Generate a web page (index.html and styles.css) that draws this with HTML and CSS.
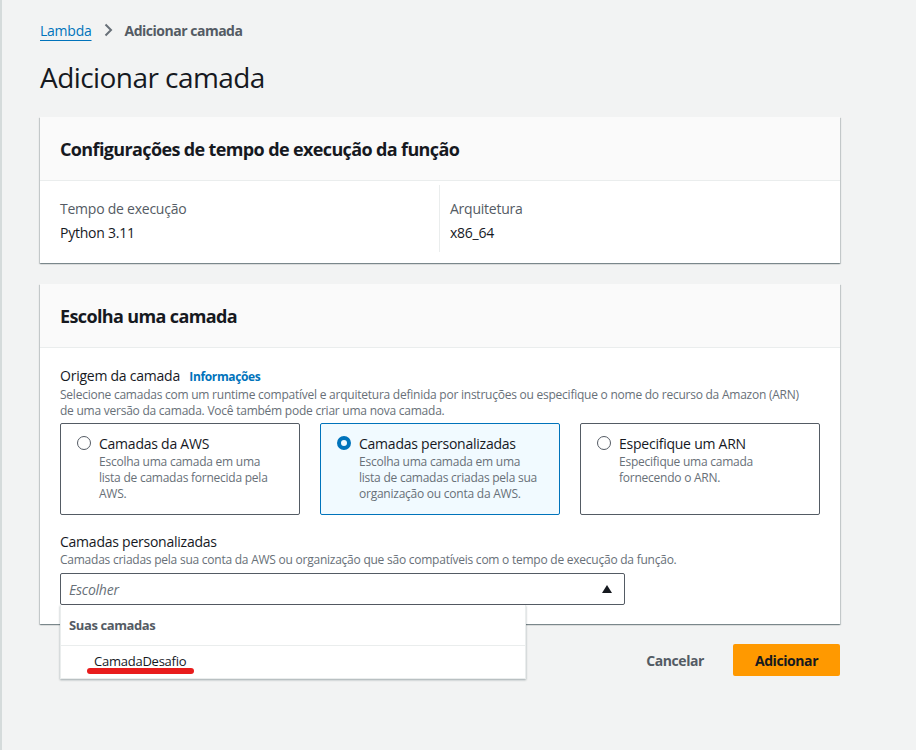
FILE: index.html
```html
<!DOCTYPE html>
<html lang="pt">
<head>
<meta charset="utf-8">
<link rel="stylesheet" href="styles.css">
</head>
<body>
<div class="page">
  <nav class="crumbs">
    <a class="crumb-link" href="#">Lambda</a>
    <svg class="chev" width="16" height="16" viewBox="0 0 16 16"><path d="M5.5 2.5 L11 8 L5.5 13.5" fill="none" stroke="#687078" stroke-width="2"/></svg>
    <span class="crumb-cur">Adicionar camada</span>
  </nav>
  <h1 class="title">Adicionar camada</h1>

  <section class="card card1">
    <div class="card-head"><h2>Configurações de tempo de execução da função</h2></div>
    <div class="card-body cols">
      <div class="col">
        <div class="kv-label">Tempo de execução</div>
        <div class="kv-value">Python 3.11</div>
      </div>
      <div class="col col-div">
        <div class="kv-label">Arquitetura</div>
        <div class="kv-value">x86_64</div>
      </div>
    </div>
  </section>

  <section class="card card2">
    <div class="card-head"><h2>Escolha uma camada</h2></div>
    <div class="card-body body2">
      <div class="field-label">Origem da camada <a class="info" href="#">Informações</a></div>
      <p class="field-desc">Selecione camadas com um runtime compatível e arquitetura definida por instruções ou especifique o nome do recurso da Amazon (ARN) de uma versão da camada. Você também pode criar uma nova camada.</p>
      <div class="tiles">
        <div class="tile">
          <div class="tile-row"><span class="radio"></span><span class="tile-title">Camadas da AWS</span></div>
          <div class="tile-desc">Escolha uma camada em uma lista de camadas fornecida pela AWS.</div>
        </div>
        <div class="tile tile-on">
          <div class="tile-row"><span class="radio radio-on"></span><span class="tile-title">Camadas personalizadas</span></div>
          <div class="tile-desc">Escolha uma camada em uma lista de camadas criadas pela sua organização ou conta da AWS.</div>
        </div>
        <div class="tile">
          <div class="tile-row"><span class="radio"></span><span class="tile-title">Especifique um ARN</span></div>
          <div class="tile-desc">Especifique uma camada fornecendo o ARN.</div>
        </div>
      </div>
      <div class="field2">
        <div class="field-label2">Camadas personalizadas</div>
        <p class="field-desc">Camadas criadas pela sua conta da AWS ou organização que são compatíveis com o tempo de execução da função.</p>
        <div class="select-wrap">
          <div class="select"><span class="ph">Escolher</span><svg width="12" height="10" viewBox="0 0 12 10"><path d="M6 1 L11 9 L1 9 Z" fill="#16191f"/></svg></div>
          <div class="dropdown">
            <div class="dd-group">Suas camadas</div>
            <div class="dd-item"><span class="dd-text">CamadaDesafio</span><span class="mark"></span></div>
          </div>
        </div>
      </div>
    </div>
  </section>

  <div class="actions">
    <button class="btn-link">Cancelar</button>
    <button class="btn-primary">Adicionar</button>
  </div>
</div>
</body>
</html>
```
FILE: styles.css
```css
html, body {
  margin: 0;
  padding: 0;
}
body {
  background: #f2f3f3;
  font-family: "Open Sans", "Noto Sans", sans-serif;
  color: #16191f;
  width: 916px;
  height: 750px;
  overflow: hidden;
  letter-spacing: -0.015em;
}
.page {
  border-left: 2px solid #d5dbdb;
  box-sizing: border-box;
  height: 750px;
  padding: 20px 76px 0 38px;
}
.crumbs {
  display: flex;
  align-items: center;
  height: 20px;
  font-size: 14px;
}
.crumb-link {
  color: #0073bb;
  text-decoration: underline;
  text-underline-offset: 4px;
}
.chev {
  margin: 0 9px 0 8px;
}
.crumb-cur {
  color: #545b64;
  font-weight: 700;
  letter-spacing: -0.035em;
}
.title {
  margin: 21px 0 0 0;
  font-size: 28px;
  font-weight: 400;
  line-height: 32px;
  height: 32px;
  letter-spacing: -0.02em;
}
.card {
  background: #fff;
  box-shadow: 0 1px 1px 0 rgba(0,28,36,.3), 1px 1px 1px 0 rgba(0,28,36,.15), -1px 1px 1px 0 rgba(0,28,36,.15);
}
.card1 {
  margin-top: 24px;
}
.card-head {
  background: #fafafa;
  border-bottom: 1px solid #eaeded;
  height: 63px;
  display: flex;
  align-items: center;
  padding: 0 20px;
}
.card-head h2 {
  margin: 0;
  font-size: 18px;
  font-weight: 700;
  letter-spacing: -0.035em;
}
.cols {
  display: flex;
  height: 82px;
}
.col {
  width: 399px;
  flex: none;
  padding: 17px 20px 0 20px;
  box-sizing: border-box;
}
.col-div {
  flex: 1;
  width: auto;
  border-left: 1px solid #eaeded;
  padding: 13px 10px 0 10px;
  margin-top: 4px;
  height: 67px;
}
.kv-label {
  font-size: 14px;
  color: #545b64;
  line-height: 22px;
}
.kv-value {
  font-size: 14px;
  line-height: 22px;
  margin-top: 2px;
}
.card2 {
  margin-top: 21px;
  height: 340px;
}
.body2 {
  padding: 18px 20px 0 20px;
}
.field-label {
  font-size: 14px;
  line-height: 20px;
}
.info {
  color: #0073bb;
  font-weight: 700;
  font-size: 12px;
  text-decoration: none;
  margin-left: 6px;
  letter-spacing: -0.03em;
}
.field-desc {
  margin: 0;
  max-width: 748px;
  font-size: 12px;
  line-height: 16px;
  color: #687078;
}
.tiles {
  display: flex;
  gap: 20px;
  margin-top: 4px;
}
.tile {
  width: 240px;
  height: 92px;
  box-sizing: border-box;
  border: 1px solid #545b64;
  border-radius: 2px;
  padding: 9px 18px 0 16px;
}
.tile-on {
  border-color: #0073bb;
  background: #f1faff;
}
.tile-row {
  display: flex;
  align-items: center;
  gap: 8px;
  height: 20px;
}
.radio {
  width: 14px;
  height: 14px;
  box-sizing: border-box;
  border: 1px solid #545b64;
  border-radius: 50%;
  flex: none;
}
.radio-on {
  border: 4px solid #0073bb;
}
.tile-title {
  font-size: 14px;
}
.tile-desc {
  font-size: 12px;
  line-height: 16px;
  color: #687078;
  padding-left: 22px;
  margin-top: 1px;
}
.field2 {
  margin-top: 18px;
}
.field-label2 {
  font-size: 14px;
  line-height: 18px;
  margin-bottom: 1px;
}
.select-wrap {
  position: relative;
  width: 565px;
  margin-top: 5px;
}
.select {
  height: 32px;
  box-sizing: border-box;
  border: 1px solid #545b64;
  border-radius: 2px;
  display: flex;
  align-items: center;
  justify-content: space-between;
  padding: 0 11px 0 8px;
}
.ph {
  font-style: italic;
  color: #687078;
  font-size: 14px;
}
.dropdown {
  position: absolute;
  top: 32px;
  left: 0;
  width: 466px;
  background: #fff;
  box-shadow: 0 1px 2px rgba(0,28,36,.35);
  border: 1px solid #eaeded;
  border-top: none;
  box-sizing: border-box;
  z-index: 2;
}
.dd-group {
  height: 40px;
  display: flex;
  align-items: center;
  padding-left: 8px;
  font-size: 13px;
  font-weight: 700;
  color: #545b64;
  border-bottom: 1px solid #eaeded;
  letter-spacing: -0.03em;
}
.dd-item {
  position: relative;
  height: 32px;
  padding-left: 33px;
  font-size: 13px;
  line-height: 30px;
}
.mark {
  position: absolute;
  left: 26px;
  top: 22px;
  width: 107px;
  height: 6px;
  border-radius: 3px;
  background: #e81c1c;
}
.actions {
  display: flex;
  justify-content: flex-end;
  align-items: center;
  gap: 29px;
  margin-top: 20px;
}
.btn-link {
  background: none;
  border: none;
  font-family: inherit;
  font-size: 14px;
  font-weight: 700;
  color: #545b64;
  padding: 0;
  letter-spacing: -0.03em;
}
.btn-primary {
  width: 107px;
  height: 32px;
  background: #ff9900;
  border: none;
  border-radius: 2px;
  font-family: inherit;
  font-size: 14px;
  font-weight: 700;
  color: #16191f;
  letter-spacing: -0.03em;
}
```
